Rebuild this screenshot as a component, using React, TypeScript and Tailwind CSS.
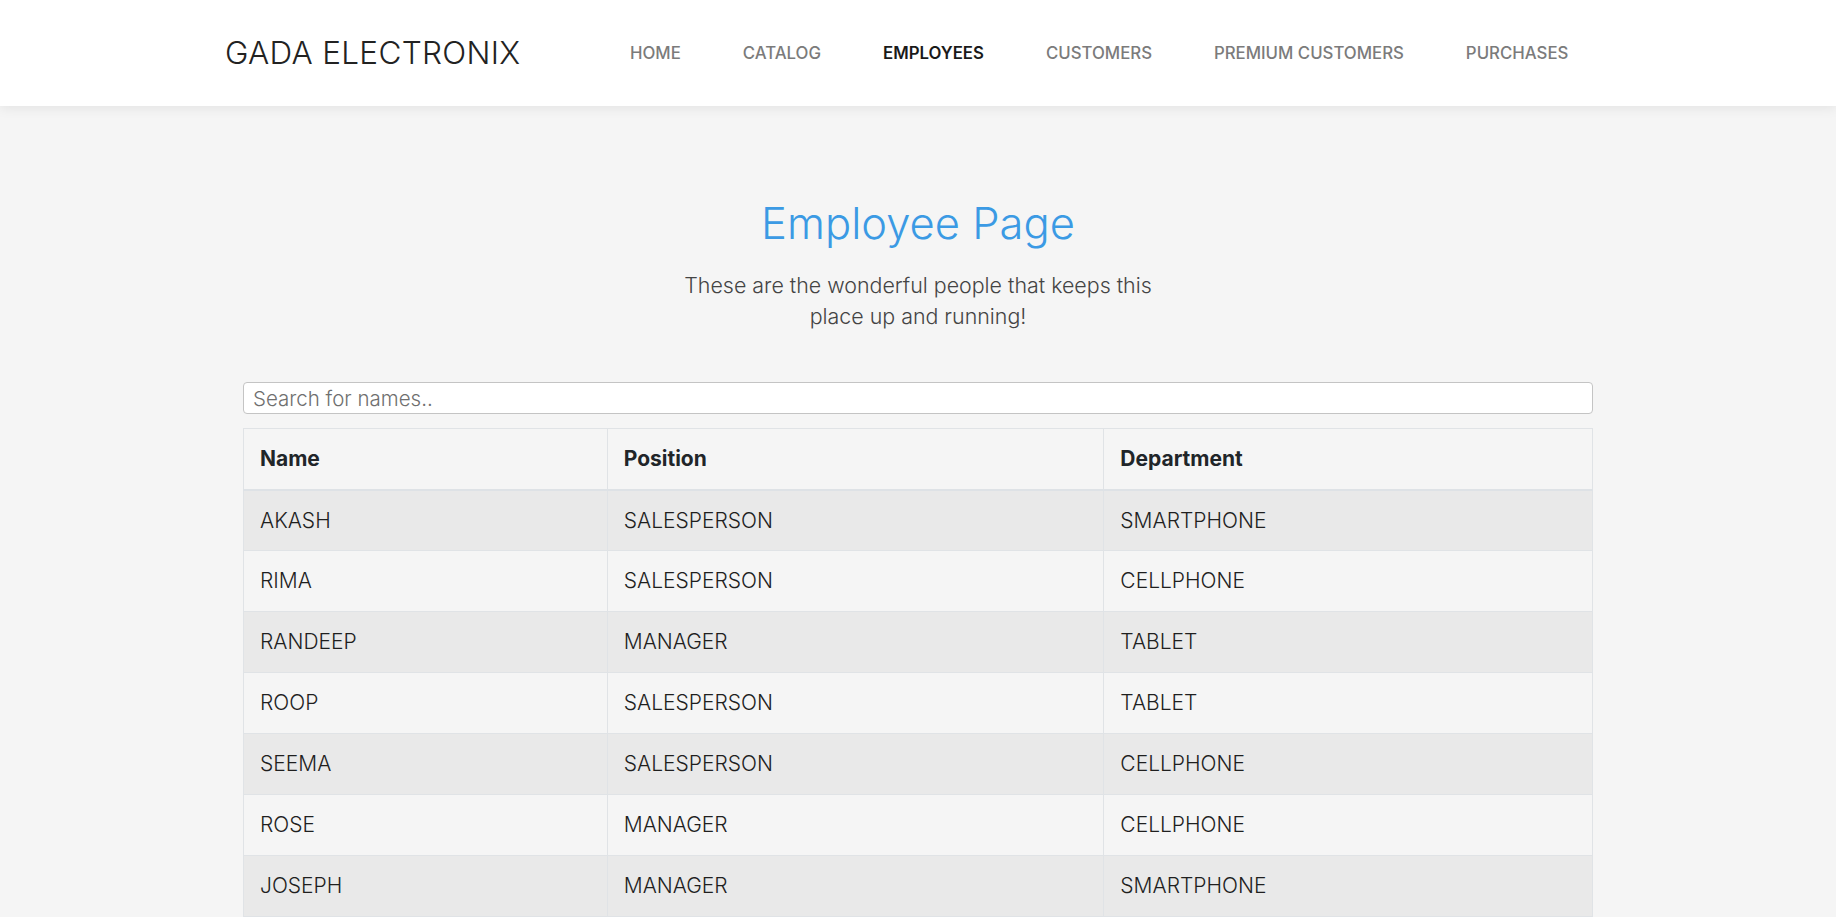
import React from 'react'

const navLinks = ['HOME', 'CATALOG', 'EMPLOYEES', 'CUSTOMERS', 'PREMIUM CUSTOMERS', 'PURCHASES']

const employees = [
  { name: 'AKASH', position: 'SALESPERSON', dept: 'SMARTPHONE' },
  { name: 'RIMA', position: 'SALESPERSON', dept: 'CELLPHONE' },
  { name: 'RANDEEP', position: 'MANAGER', dept: 'TABLET' },
  { name: 'ROOP', position: 'SALESPERSON', dept: 'TABLET' },
  { name: 'SEEMA', position: 'SALESPERSON', dept: 'CELLPHONE' },
  { name: 'ROSE', position: 'MANAGER', dept: 'CELLPHONE' },
  { name: 'JOSEPH', position: 'MANAGER', dept: 'SMARTPHONE' },
  { name: 'KIRAN', position: 'SALESPERSON', dept: 'LAPTOP' },
  { name: 'MOHAN', position: 'SALESPERSON', dept: 'LAPTOP' },
]

export default function App() {
  return (
    <div className="min-h-screen bg-[#f5f5f5] font-['Inter','Liberation_Sans',sans-serif] text-[#222]">
      <header className="h-[106px] bg-white shadow-[0_2px_12px_rgba(0,0,0,0.08)] relative z-10">
        <div className="h-full flex items-center pl-[225px]">
          <a className="w-[405px] text-[31.5px] font-light tracking-[0.3px] text-[#222]">GADA ELECTRONIX</a>
          <nav className="flex items-center gap-[62px] pt-[2px]">
            {navLinks.map((l) => (
              <a
                key={l}
                className={
                  l === 'EMPLOYEES'
                    ? 'text-[16.8px] font-semibold text-[#1a1a1a]'
                    : 'text-[16.8px] font-medium text-[#7b7b7b]'
                }
              >
                {l}
              </a>
            ))}
          </nav>
        </div>
      </header>

      <main className="pt-[92px]">
        <h1 className="text-center text-[43.5px] leading-[51px] font-light text-[#3b9ae4]">Employee Page</h1>
        <p className="mx-auto mt-[21px] max-w-[490px] text-center text-[21.4px] leading-[31px] font-light text-[#444]">
          These are the wonderful people that keeps this place up and running!
        </p>

        <div className="mx-auto mt-[50px] w-[1350px]">
          <input
            type="text"
            placeholder="Search for names.."
            className="block w-full h-[32px] rounded-[4px] border border-[#c4c4c4] bg-white px-[9px] text-[20.5px] font-light text-[#333] placeholder:text-[#6f6f6f] outline-none"
          />

          <table className="mt-[14px] w-full border-collapse border border-[#e0e3e6] text-left">
            <colgroup>
              <col className="w-[364px]" />
              <col className="w-[497px]" />
              <col className="w-[489px]" />
            </colgroup>
            <thead>
              <tr className="h-[61px] bg-[#f5f5f5] border-b-2 border-[#dee2e6]">
                <th className="pl-4 text-[21px] font-bold text-[#212529] border-r border-[#e0e3e6]">Name</th>
                <th className="pl-4 text-[21px] font-bold text-[#212529] border-r border-[#e0e3e6]">Position</th>
                <th className="pl-4 text-[21px] font-bold text-[#212529]">Department</th>
              </tr>
            </thead>
            <tbody>
              {employees.map((e, i) => (
                <tr key={e.name} className={(i % 2 === 0 ? 'bg-[#e9e9e9]' : 'bg-[#f5f5f5]') + ' h-[61px] border-b border-[#e0e3e6]'}>
                  <td className="pl-4 text-[21px] font-light text-[#1f1f1f] border-r border-[#e0e3e6]">{e.name}</td>
                  <td className="pl-4 text-[21px] font-light text-[#1f1f1f] border-r border-[#e0e3e6]">{e.position}</td>
                  <td className="pl-4 text-[21px] font-light text-[#1f1f1f]">{e.dept}</td>
                </tr>
              ))}
            </tbody>
          </table>
        </div>
      </main>
    </div>
  )
}
